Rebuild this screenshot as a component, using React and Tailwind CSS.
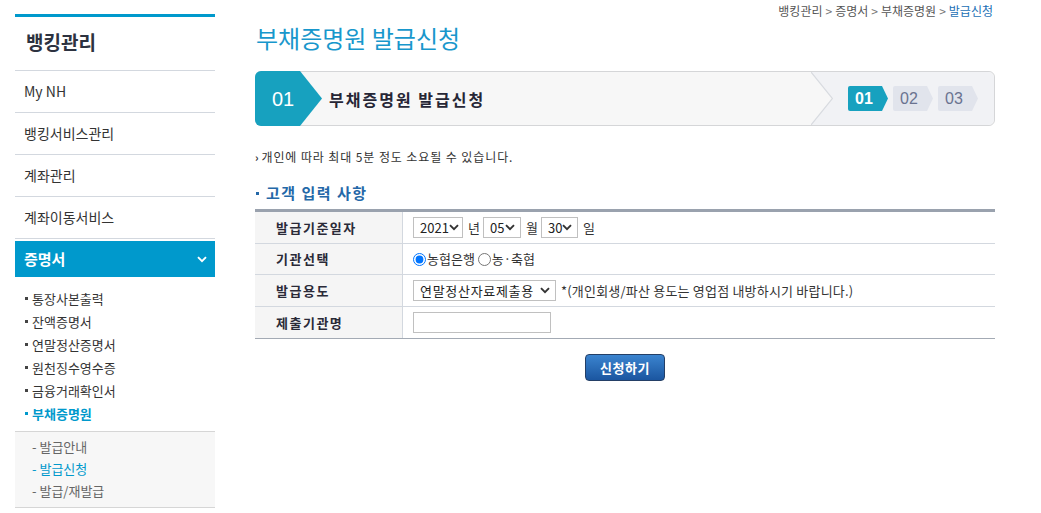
import React from "react";

function Chevron({ className = "" }) {
  return (
    <svg width="10" height="7" viewBox="0 0 10 7" className={className}>
      <path d="M1 1.2l4 4 4-4" fill="none" stroke="currentColor" strokeWidth="1.9" />
    </svg>
  );
}

function Sel({ className, children }) {
  return (
    <div className={`flex items-center justify-between h-[21px] border border-[#c0c0c0] bg-white pl-[6px] pr-[5px] text-[13px] text-[#222] whitespace-nowrap ${className}`}>
      <span className="leading-[19px]">{children}</span>
      <Chevron className="text-[#333] shrink-0" />
    </div>
  );
}

function Row({ label, children, h }) {
  return (
    <div className={`flex border-b border-[#d3d8df] ${h}`}>
      <div className="w-[148px] shrink-0 bg-[#f5f5f5] border-r border-[#d3d8df] pl-[21px] flex items-center text-[13px] font-bold text-[#2a2a38] tracking-[1.5px]">
        {label}
      </div>
      <div className="flex-1 pl-[10px] flex items-center text-[13px] text-[#333]">{children}</div>
    </div>
  );
}

export default function App() {
  const sideItems = ["My NH", "뱅킹서비스관리", "계좌관리", "계좌이동서비스"];
  const subItems = ["통장사본출력", "잔액증명서", "연말정산증명서", "원천징수영수증", "금융거래확인서"];
  return (
    <div className="w-[1041px] h-[513px] bg-white flex pl-[15px] font-['Noto_Sans_CJK_KR',sans-serif] text-[#333] overflow-hidden">
      {/* Sidebar */}
      <div className="w-[200px] shrink-0 pt-[14px]">
        <div className="border-t-[3px] border-[#0099cc]">
          <div className="h-[54px] flex items-center pb-[4px] pl-[11px] border-b border-[#d3d8df] text-[19px] font-bold text-[#2d3240] leading-none">
            뱅킹관리
          </div>
          {sideItems.map((t) => (
            <div key={t} className="h-[42px] flex items-center pl-[9px] border-b border-[#d3d8df] text-[14px] text-[#333]">
              {t}
            </div>
          ))}
          <div className="mt-[2px] h-[36px] bg-[#0099cc] flex items-center justify-between pl-[9px] pr-[8px] text-white">
            <span className="text-[15px] font-bold">증명서</span>
            <Chevron className="text-white" />
          </div>
          <div className="pt-[10px] pb-[6px]">
            {subItems.map((t) => (
              <div key={t} className="h-[23px] flex items-center pl-[10px] text-[13px] text-[#333]">
                <span className="w-[3px] h-[3px] bg-[#444] mr-[4px]" />
                {t}
              </div>
            ))}
            <div className="h-[23px] flex items-center pl-[10px] text-[13px] text-[#0099cc] font-bold">
              <span className="w-[3px] h-[3px] bg-[#0099cc] mr-[4px]" />
              부채증명원
            </div>
          </div>
          <div className="bg-[#f7f7f7] border-t border-b border-[#d6d6d6] pt-[4px] pb-[5px]">
            <div className="h-[22px] flex items-center pl-[17px] text-[13px] text-[#666]">- 발급안내</div>
            <div className="h-[22px] flex items-center pl-[17px] text-[13px] text-[#0099cc]">- 발급신청</div>
            <div className="h-[22px] flex items-center pl-[17px] text-[13px] text-[#666]">- 발급/재발급</div>
          </div>
        </div>
      </div>

      {/* Main */}
      <div className="ml-[40px] w-[740px] shrink-0">
        <div className="h-[22px] flex items-center justify-end pr-[2px] text-[12px] text-[#555] gap-[3px]">
          <span>뱅킹관리</span>
          <span className="text-[#777]">&gt;</span>
          <span>증명서</span>
          <span className="text-[#777]">&gt;</span>
          <span>부채증명원</span>
          <span className="text-[#777]">&gt;</span>
          <span className="text-[#1a6fb5]">발급신청</span>
        </div>
        <div className="h-[32px] flex items-center pl-[1px] text-[24px] text-[#1897cc] leading-none">부채증명원 발급신청</div>

        {/* Step box */}
        <div className="mt-[17px] h-[55px] flex rounded-[6px] border border-[#d5d6d8] bg-[#f7f7f7]">
          <div className="-m-px h-[55px] w-[67px] shrink-0 rounded-l-[6px] bg-[#17a1bf] [clip-path:polygon(0_0,45px_0,67px_50%,45px_100%,0_100%)] flex items-center pl-[17px] text-white text-[20px] font-['Liberation_Sans',sans-serif]">
            01
          </div>
          <div className="flex-1 flex items-center pl-[8px] text-[16px] font-bold text-[#262636] tracking-[2px]">
            부채증명원 발급신청
          </div>
          <div className="w-[183px] shrink-0 flex bg-[#f1f2f5] rounded-r-[6px]">
            <svg width="22" height="53" viewBox="0 0 22 53" className="shrink-0">
              <path d="M0 0 L22 26.5 L0 53 Z" fill="#f7f7f7" />
              <path d="M0 0 L21.5 26.5 L0 53" fill="none" stroke="#d8dbe0" strokeWidth="1.2" />
            </svg>
            <div className="flex items-center gap-[5px] pl-[15px] font-['Liberation_Sans',sans-serif] text-[16px]">
              <div className="w-[40px] h-[25px] bg-[#17a1bf] text-white rounded-l-[2px] [clip-path:polygon(0_0,34px_0,40px_50%,34px_100%,0_100%)] flex items-center pl-[7px] font-bold">01</div>
              <div className="w-[40px] h-[25px] bg-[#e1e4ec] text-[#6a7390] rounded-l-[2px] [clip-path:polygon(0_0,34px_0,40px_50%,34px_100%,0_100%)] flex items-center pl-[7px]">02</div>
              <div className="w-[40px] h-[25px] bg-[#e1e4ec] text-[#6a7390] rounded-l-[2px] [clip-path:polygon(0_0,34px_0,40px_50%,34px_100%,0_100%)] flex items-center pl-[7px]">03</div>
            </div>
          </div>
        </div>

        <div className="mt-[22px] h-[18px] flex items-center text-[12px] text-[#333] tracking-[0.9px]">
          <span className="font-bold mr-[2px] text-[11px]">›</span>
          개인에 따라 최대 5분 정도 소요될 수 있습니다.
        </div>

        <div className="mt-[17px] h-[20px] flex items-center text-[15px] font-bold text-[#2468a8] tracking-[1.5px]">
          <span className="w-[3px] h-[3px] bg-[#2468a8] ml-[1px] mr-[7px]" />
          고객 입력 사항
        </div>

        {/* Table */}
        <div className="mt-[6px] border-t-[3px] border-[#9aa2ae]">
          <Row label="발급기준일자" h="h-[32px]">
            <div className="flex items-center">
              <Sel className="w-[50px]">2021</Sel>
              <span className="ml-[5px] mr-[3px]">년</span>
              <Sel className="w-[38px]">05</Sel>
              <span className="ml-[5px] mr-[3px]">월</span>
              <Sel className="w-[37px]">30</Sel>
              <span className="ml-[5px]">일</span>
            </div>
          </Row>
          <Row label="기관선택" h="h-[31px]">
            <label className="flex items-center">
              <input type="radio" name="org" defaultChecked className="w-[13px] h-[13px] m-0" />
              <span className="ml-[1px]">농협은행</span>
            </label>
            <label className="flex items-center ml-[3px]">
              <input type="radio" name="org" className="w-[13px] h-[13px] m-0" />
              <span className="ml-[1px]">농·축협</span>
            </label>
          </Row>
          <Row label="발급용도" h="h-[32px]">
            <Sel className="w-[143px] tracking-[0.7px]">연말정산자료제출용</Sel>
            <span className="ml-[5px] tracking-[0.2px]">*(개인회생/파산 용도는 영업점 내방하시기 바랍니다.)</span>
          </Row>
          <div className="border-b border-[#a3aab4]">
            <div className="flex h-[31px]">
              <div className="w-[148px] shrink-0 bg-[#f5f5f5] border-r border-[#d3d8df] pl-[21px] flex items-center text-[13px] font-bold text-[#2a2a38] tracking-[1.5px]">
                제출기관명
              </div>
              <div className="flex-1 pl-[10px] flex items-center">
                <div className="w-[138px] h-[21px] border border-[#c0c0c0] bg-white" />
              </div>
            </div>
          </div>
        </div>

        <div className="mt-[15px] flex justify-center">
          <button className="w-[80px] h-[27px] rounded-[4px] border border-[#243f66] bg-gradient-to-b from-[#3b84cf] to-[#1b56a0] text-white text-[13px] font-bold tracking-[0.5px]">
            신청하기
          </button>
        </div>
      </div>
    </div>
  );
}
